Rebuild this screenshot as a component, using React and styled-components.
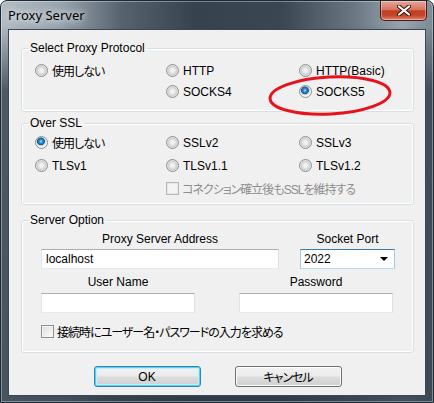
import React from "react";
import styled, { createGlobalStyle } from "styled-components";

const GlobalStyle = createGlobalStyle`
  html, body {
    margin: 0;
    padding: 0;
    background: #ffffff;
  }
  body {
    font-family: "Liberation Sans", "Noto Sans CJK JP", sans-serif;
    font-size: 12px;
    color: #000;
  }
`;

const Window = styled.div`
  position: relative;
  box-sizing: border-box;
  width: 434px;
  height: 403px;
  display: flex;
  flex-direction: column;
  border: 1px solid #1e2a35;
  border-radius: 7px 7px 0 0;
  overflow: hidden;
  background: linear-gradient(
      180deg,
      rgba(44, 56, 68, 0) 0,
      rgba(44, 56, 68, 0) 24px,
      rgba(44, 56, 68, 0.75) 90px,
      rgba(44, 56, 68, 0.8) 100%
    ),
    linear-gradient(
      90deg,
      #b3bdc4 0%,
      #98a4ad 14%,
      #56636f 28%,
      #36434f 45%,
      #3a4753 65%,
      #6b7884 82%,
      #9aa6ae 93%,
      #7d8993 100%
    );
  box-shadow: inset 0 0 0 1px rgba(255, 255, 255, 0.35);
`;

const TitleBar = styled.div`
  height: 28px;
  display: flex;
  align-items: flex-start;
  padding: 0 6px 0 7px;
`;

const TitleText = styled.span`
  font-family: "Noto Sans", "Liberation Sans", sans-serif;
  font-size: 13px;
  line-height: 28px;
  color: #000;
  text-shadow: 0 0 6px rgba(255, 255, 255, 0.9), 0 0 10px rgba(255, 255, 255, 0.6);
`;

const CloseButton = styled.div`
  margin-left: auto;
  box-sizing: border-box;
  width: 47px;
  height: 20px;
  display: flex;
  align-items: center;
  justify-content: center;
  border: 1px solid #4a1a12;
  border-top: none;
  border-radius: 0 0 5px 5px;
  background: linear-gradient(
    180deg,
    #e6a698 0%,
    #d67563 45%,
    #c23c22 52%,
    #c8472c 78%,
    #e48a70 100%
  );
  box-shadow: inset 0 0 0 1px rgba(255, 255, 255, 0.35);
`;

const Client = styled.div`
  flex: 1;
  margin: 0 7px 6px;
  border: 1px solid #3b4856;
  background: #f0f0f0;
  padding: 11px 11px 0 12px;
  display: flex;
  flex-direction: column;
`;

const Group = styled.fieldset`
  margin: ${(p) => p.$top || 0}px 0 0;
  padding: ${(p) => p.$pad};
  border: 1px solid #d5dfe5;
  border-radius: 3px;
  box-shadow: inset 0 0 0 1px #ffffff;
  min-width: 0;
`;

const Legend = styled.legend`
  margin-left: 6px;
  padding: 0 2px;
  line-height: 14px;
  font-size: 12px;
`;

const OptionGrid = styled.div`
  display: grid;
  grid-template-columns: 131px 133px 1fr;
  grid-auto-rows: ${(p) => p.$row}px;
  padding-left: 13px;
`;

const Option = styled.label`
  display: flex;
  align-items: center;
  gap: ${(p) => (p.$box ? 3 : 4)}px;
  white-space: nowrap;
  color: ${(p) => (p.$disabled ? "#8d8d8d" : "#000")};
  grid-column: ${(p) => p.$col || "auto"};
`;

const Radio = styled.span`
  box-sizing: border-box;
  width: 13px;
  height: 13px;
  flex: none;
  border-radius: 50%;
  border: 1px solid #8e8f8f;
  background: ${(p) =>
    p.$checked
      ? "radial-gradient(circle at 45% 40%, #a8e4ff 0, #2f95d8 1.6px, #13578f 3.6px, #d8d8d8 4.2px, #f4f4f4 5.5px)"
      : "radial-gradient(circle at 50% 50%, #f6f6f6 0, #eeeeee 2px, #cfcfcf 4.3px, #e9e9e9 5.5px)"};
`;

const Check = styled.span`
  box-sizing: border-box;
  width: 13px;
  height: 13px;
  flex: none;
  border: 1px solid ${(p) => (p.$disabled ? "#b8b8b8" : "#8e8f8f")};
  background: ${(p) =>
    p.$disabled
      ? "#f4f4f4"
      : "linear-gradient(135deg, #dcdcdc 0%, #f0f0f0 60%, #ffffff 100%)"};
  box-shadow: inset 0 0 0 1px ${(p) => (p.$disabled ? "#e6e6e6" : "#f4f4f4")};
`;

const Jp = styled.span`
  font-feature-settings: "palt";
  letter-spacing: -1px;
`;

const FormBody = styled.div`
  padding-left: 19px;
`;

const FieldRow = styled.div`
  display: grid;
  grid-template-columns: ${(p) => p.$cols};
  column-gap: ${(p) => p.$gap}px;
  margin-top: ${(p) => p.$top}px;
`;

const Field = styled.div`
  display: flex;
  flex-direction: column;
  align-items: stretch;
`;

const FieldLabel = styled.span`
  text-align: center;
  line-height: 14px;
  margin-bottom: ${(p) => p.$gap}px;
`;

const TextBox = styled.div`
  box-sizing: border-box;
  height: 20px;
  padding: 0 4px;
  display: flex;
  align-items: center;
  background: #ffffff;
  border: 1px solid;
  border-color: #abadb3 #dbdfe6 #e3e9ef #e2e3ea;
`;

const ComboBox = styled(TextBox)`
  padding: 0 4px 0 3px;
  border-color: #3d7bad #a4c9e3 #b7d9ed #a4c9e3;
  justify-content: space-between;
`;

const Arrow = styled.span`
  width: 0;
  height: 0;
  border-left: 4px solid transparent;
  border-right: 4px solid transparent;
  border-top: 4px solid #000;
  margin-right: 2px;
`;

const CheckRow = styled.div`
  display: flex;
  margin-top: 10px;
`;

const ButtonBar = styled.div`
  display: flex;
  justify-content: center;
  gap: 34px;
  margin-top: 13px;
`;

const Button = styled.div`
  box-sizing: border-box;
  width: 107px;
  height: 21px;
  display: flex;
  align-items: center;
  justify-content: center;
  border-radius: 3px;
  border: 1px solid ${(p) => (p.$default ? "#3c7fb1" : "#707070")};
  background: linear-gradient(
    180deg,
    #f2f2f2 0%,
    #ebebeb 48%,
    #dddddd 52%,
    #cfcfcf 100%
  );
  box-shadow: ${(p) =>
    p.$default
      ? "inset 0 0 0 1px #48d8fb, inset 0 0 0 2px #c6edfc"
      : "inset 0 0 0 1px #fcfcfc"};
`;

const Annotation = styled.svg`
  position: absolute;
  left: -1px;
  top: -1px;
  pointer-events: none;
`;

const protocolOptions = [
  { label: "使用しない", jp: true },
  { label: "HTTP" },
  { label: "HTTP(Basic)" },
  { label: "SOCKS4", col: 2 },
  { label: "SOCKS5", checked: true },
];

const sslOptions = [
  { label: "使用しない", jp: true, checked: true },
  { label: "SSLv2" },
  { label: "SSLv3" },
  { label: "TLSv1" },
  { label: "TLSv1.1" },
  { label: "TLSv1.2" },
];

const RadioOption = ({ option }) => (
  <Option $col={option.col}>
    <Radio $checked={option.checked} />
    {option.jp ? <Jp>{option.label}</Jp> : option.label}
  </Option>
);

const App = () => {
  return (
    <>
      <GlobalStyle />
      <Window>
        <TitleBar>
          <TitleText>Proxy Server</TitleText>
          <CloseButton>
            <svg width="14" height="11" viewBox="0 0 14 11">
              <path
                d="M2 1.5 L12 9.5 M12 1.5 L2 9.5"
                stroke="#3a1410"
                strokeWidth="4"
                strokeLinecap="round"
              />
              <path
                d="M2 1.5 L12 9.5 M12 1.5 L2 9.5"
                stroke="#ffffff"
                strokeWidth="2.2"
                strokeLinecap="round"
              />
            </svg>
          </CloseButton>
        </TitleBar>
        <Client>
          <Group $pad="5px 0 9px">
            <Legend>Select Proxy Protocol</Legend>
            <OptionGrid $row={21}>
              {protocolOptions.map((o) => (
                <RadioOption key={o.label} option={o} />
              ))}
            </OptionGrid>
          </Group>

          <Group $top={4} $pad="1px 0 4px">
            <Legend>Over SSL</Legend>
            <OptionGrid $row={23}>
              {sslOptions.map((o) => (
                <RadioOption key={o.label} option={o} />
              ))}
              <Option $col="2 / span 2" $disabled $box>
                <Check $disabled />
                <Jp>コネクション確立後もSSLを維持する</Jp>
              </Option>
            </OptionGrid>
          </Group>

          <Group $top={8} $pad="5px 0 12px">
            <Legend>Server Option</Legend>
            <FormBody>
              <FieldRow $cols="238px 95px" $gap={21} $top={0}>
                <Field>
                  <FieldLabel $gap={3}>Proxy Server Address</FieldLabel>
                  <TextBox>localhost</TextBox>
                </Field>
                <Field>
                  <FieldLabel $gap={3}>Socket Port</FieldLabel>
                  <ComboBox>
                    2022
                    <Arrow />
                  </ComboBox>
                </Field>
              </FieldRow>
              <FieldRow $cols="154px 154px" $gap={44} $top={6}>
                <Field>
                  <FieldLabel $gap={4}>User Name</FieldLabel>
                  <TextBox />
                </Field>
                <Field>
                  <FieldLabel $gap={4}>Password</FieldLabel>
                  <TextBox />
                </Field>
              </FieldRow>
              <CheckRow>
                <Option $box>
                  <Check />
                  <Jp>接続時にユーザー名・パスワードの入力を求める</Jp>
                </Option>
              </CheckRow>
            </FormBody>
          </Group>

          <ButtonBar>
            <Button $default>OK</Button>
            <Button>
              <Jp>キャンセル</Jp>
            </Button>
          </ButtonBar>
        </Client>

        <Annotation width="434" height="403" viewBox="0 0 434 403">
          <ellipse
            cx="330"
            cy="95.5"
            rx="60"
            ry="18.5"
            transform="rotate(-3 330 95.5)"
            fill="none"
            stroke="#e8121c"
            strokeWidth="3"
          />
        </Annotation>
      </Window>
    </>
  );
};

export default App;
